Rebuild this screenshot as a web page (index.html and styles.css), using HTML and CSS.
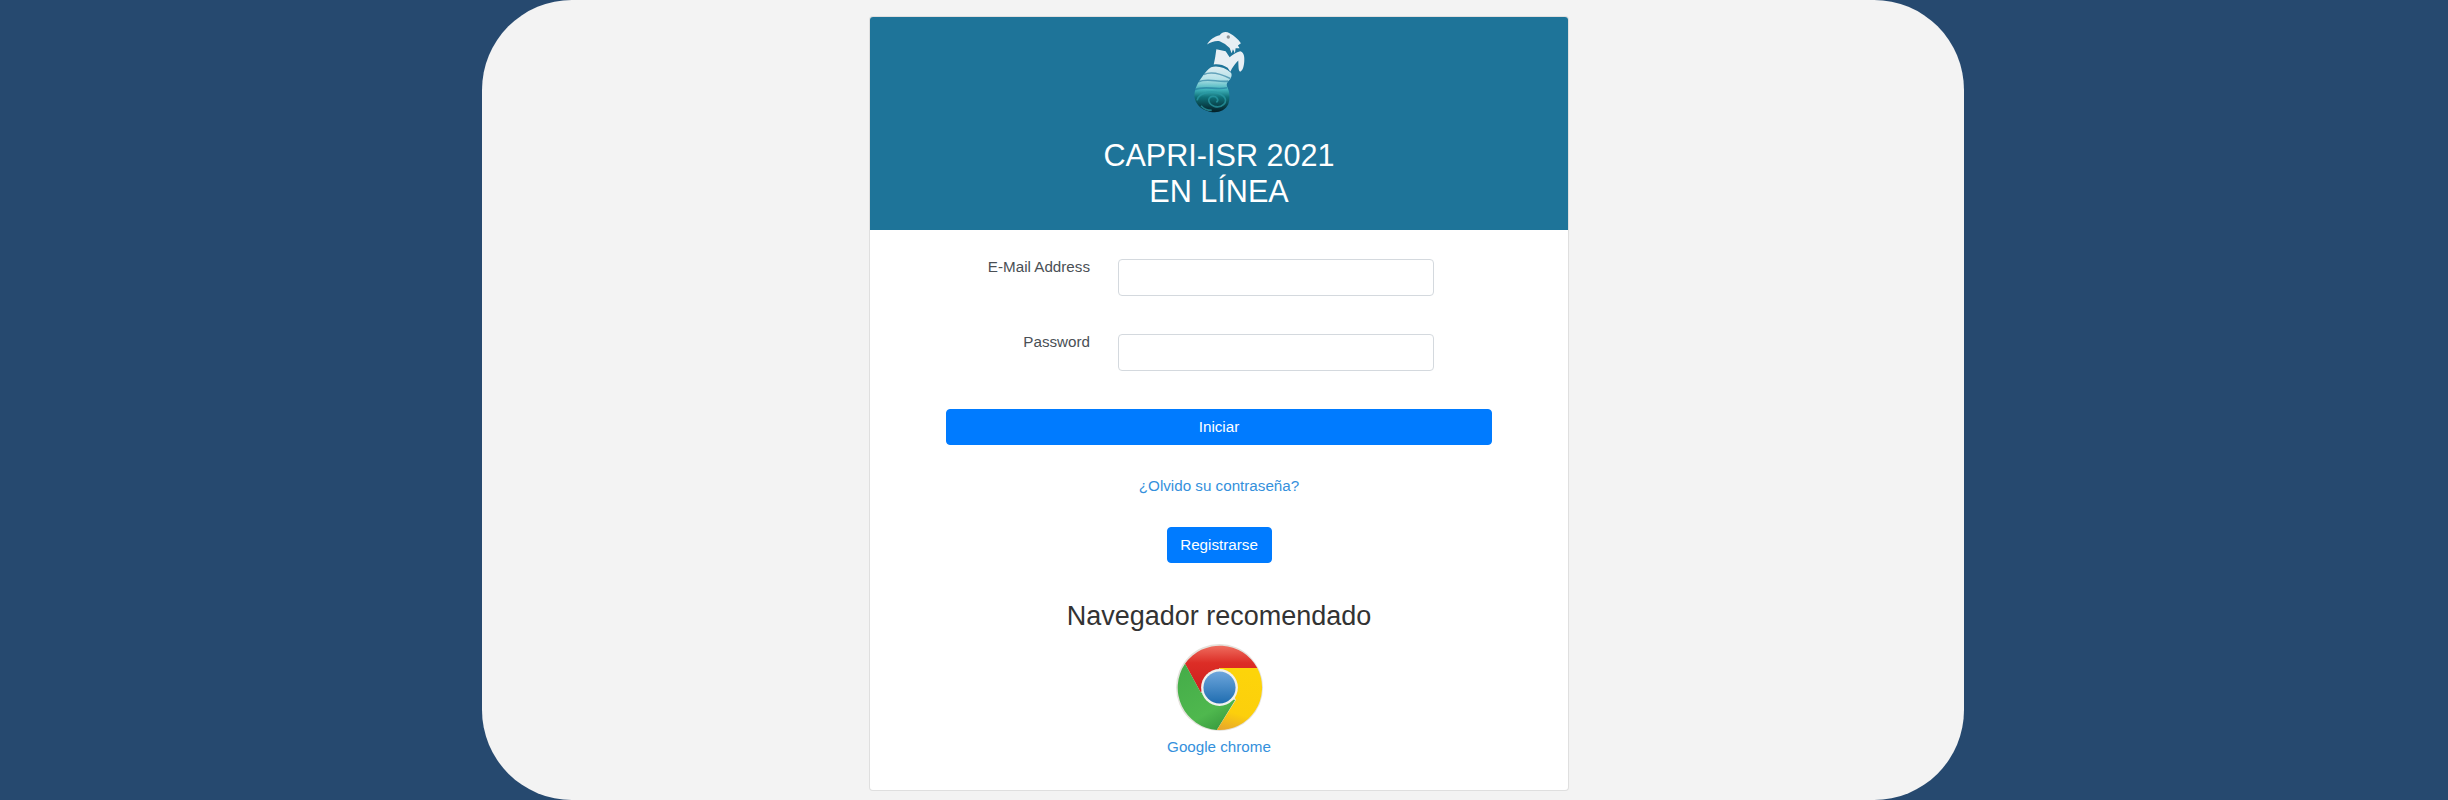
FILE: index.html
```html
<!DOCTYPE html>
<html lang="es">
<head>
<meta charset="utf-8">
<title>CAPRI-ISR 2021 EN LÍNEA</title>
<link rel="stylesheet" href="styles.css">
</head>
<body>
<main class="panel">
  <section class="card">
    <header class="card-header">
      <svg class="logo" viewBox="99 29 153 247" aria-hidden="true">
        <defs>
          <linearGradient id="seaFill" x1="0" y1="130" x2="0" y2="275" gradientUnits="userSpaceOnUse">
            <stop offset="0" stop-color="#e6eff4"/>
            <stop offset="0.3" stop-color="#b5e2e8"/>
            <stop offset="0.52" stop-color="#3fb3bb"/>
            <stop offset="0.68" stop-color="#0f7078"/>
            <stop offset="1" stop-color="#031c24"/>
          </linearGradient>
        </defs>
        <path class="logo-head" d="M138 70C146 55 160 46 176 42C184 31 196 30 206 36C220 44 232 54 240 66L231 73L236 81L224 81L222 96L216 84L212 96L206 80L192 68L176 60C164 58 150 62 138 70Z"/>
        <path class="logo-body" d="M166 84L194 90L206 108C214 102 226 92 238 90C248 92 252 106 250 122C249 136 246 148 238 152C232 150 233 136 232 118C224 126 214 138 208 152L200 140C186 130 170 128 158 130C162 114 164 98 166 84Z"/>
        <path fill="url(#seaFill)" d="M150 138C168 132 192 138 210 155C214 160 212 170 204 178C196 186 196 192 200 200C206 212 208 232 202 250C192 270 170 278 146 272C120 266 102 248 100 226C99 206 110 184 124 166C132 154 140 144 150 138Z"/>
        <g class="logo-waves">
          <path d="M128 160C150 150 180 158 208 172"/>
          <path d="M112 182C140 170 170 184 202 180"/>
          <path d="M102 206C130 192 165 208 198 200"/>
        </g>
        <path class="logo-spiral" d="M108 238C114 212 162 204 188 226C204 244 182 262 160 256C142 250 136 230 154 226C166 224 176 236 166 244M120 254C128 264 140 268 152 268"/>
        <circle cx="202" cy="47" r="5" fill="#8d9397"/>
      </svg>
      <h1 class="title">CAPRI-ISR 2021<br>EN LÍNEA</h1>
    </header>
    <div class="card-body">
      <form class="login-form">
        <div class="form-row">
          <label class="field-label" for="email">E-Mail Address</label>
          <input class="field-input" id="email" type="email">
        </div>
        <div class="form-row">
          <label class="field-label" for="password">Password</label>
          <input class="field-input" id="password" type="password">
        </div>
        <button class="btn btn-wide" type="button">Iniciar</button>
      </form>
      <a class="link forgot" href="#">¿Olvido su contraseña?</a>
      <a class="btn btn-register" href="#">Registrarse</a>
      <h2 class="browser-title">Navegador recomendado</h2>
      <svg class="chrome" viewBox="30 30 266 266" aria-hidden="true">
        <defs>
          <linearGradient id="chromeRed" x1="0" y1="36" x2="0" y2="170" gradientUnits="userSpaceOnUse">
            <stop offset="0" stop-color="#ef6f60"/>
            <stop offset="0.4" stop-color="#dc2d26"/>
            <stop offset="1" stop-color="#cf1f1f"/>
          </linearGradient>
          <linearGradient id="chromeGreen" x1="60" y1="100" x2="170" y2="290" gradientUnits="userSpaceOnUse">
            <stop offset="0" stop-color="#45ad49"/>
            <stop offset="0.7" stop-color="#4fb84e"/>
            <stop offset="1" stop-color="#389a3e"/>
          </linearGradient>
          <linearGradient id="chromeYellow" x1="230" y1="110" x2="180" y2="290" gradientUnits="userSpaceOnUse">
            <stop offset="0" stop-color="#fdd40a"/>
            <stop offset="0.7" stop-color="#fccf0c"/>
            <stop offset="1" stop-color="#e8a82a"/>
          </linearGradient>
          <linearGradient id="chromeBlue" x1="0" y1="115" x2="0" y2="211" gradientUnits="userSpaceOnUse">
            <stop offset="0" stop-color="#6ea6dc"/>
            <stop offset="1" stop-color="#1f6db0"/>
          </linearGradient>
        </defs>
        <circle cx="163" cy="163" r="130" fill="#e4e2dc"/>
        <path fill="url(#chromeRed)" d="M60 92A127 127 0 0 1 276 105L163 105L107 178Z"/>
        <path fill="url(#chromeGreen)" d="M60 92A127 127 0 0 0 155 290L210 200L107 178Z"/>
        <path fill="url(#chromeYellow)" d="M276 105A127 127 0 0 1 155 290L212 200L163 105Z"/>
        <circle cx="163" cy="163" r="55" fill="#f1f1ee"/>
        <circle cx="163" cy="163" r="48" fill="url(#chromeBlue)"/>
      </svg>
      <a class="link chrome-link" href="#">Google chrome</a>
    </div>
  </section>
</main>
</body>
</html>
```
FILE: styles.css
```css
* {
  box-sizing: border-box;
}

html,
body {
  height: 100%;
}

body {
  margin: 0;
  overflow: hidden;
  background: #26496f;
  color: #4a4f55;
  font-family: "Liberation Sans", Arial, sans-serif;
  font-size: 15.2px;
  line-height: 23px;
}

.panel {
  width: 1482px;
  height: 800px;
  margin-left: 482px;
  padding: 16px 0 0 387px;
  background: #f3f3f3;
  border-radius: 90px;
  overflow: hidden;
}

.card {
  width: 700px;
  background: #fff;
  border: 1px solid rgba(0, 0, 0, 0.125);
  border-radius: 4px;
  overflow: hidden;
}

.card-header {
  display: flex;
  flex-direction: column;
  align-items: center;
  height: 213px;
  padding-top: 14px;
  background: #1e7499;
  color: #fff;
  text-align: center;
}

.logo {
  display: block;
  width: 51px;
  height: 82px;
  margin-bottom: 24px;
}

.logo-head,
.logo-body {
  fill: #e8eff4;
}

.logo-waves {
  fill: none;
  stroke: #1e7499;
  stroke-opacity: 0.6;
  stroke-width: 5;
}

.logo-spiral {
  fill: none;
  stroke: #2a9aa4;
  stroke-opacity: 0.75;
  stroke-width: 5;
}

.title {
  margin: 0;
  font-size: 30.6px;
  font-weight: 400;
  line-height: 36px;
}

.card-body {
  display: flex;
  flex-direction: column;
  align-items: center;
  height: 560px;
  padding-top: 29px;
}

.login-form {
  display: flex;
  flex-direction: column;
  align-items: stretch;
  width: 546px;
}

.form-row {
  display: flex;
  gap: 28px;
  height: 37px;
  margin-bottom: 38px;
}

.field-label {
  width: 144px;
  line-height: 15px;
  text-align: right;
}

.field-input {
  width: 316px;
  height: 37px;
  padding: 6px 12px;
  background: #fff;
  border: 1px solid #d4d9de;
  border-radius: 4px;
}

.btn {
  display: block;
  height: 36px;
  background: #007bff;
  border: 1px solid #007bff;
  border-radius: 4px;
  color: #fff;
  font-family: inherit;
  font-size: 15.2px;
  line-height: 34px;
  text-align: center;
  text-decoration: none;
}

.btn-wide {
  width: 100%;
  padding: 0;
}

.link {
  color: #3490dc;
  text-decoration: none;
}

.forgot {
  margin-top: 29px;
}

.btn-register {
  width: 105px;
  margin-top: 30px;
}

.browser-title {
  margin: 35px 0 0;
  color: #333;
  font-size: 27px;
  font-weight: 400;
  line-height: 36px;
}

.chrome {
  display: block;
  width: 89px;
  height: 89px;
  margin-top: 9px;
}

.chrome-link {
  margin-top: 3px;
}
```
